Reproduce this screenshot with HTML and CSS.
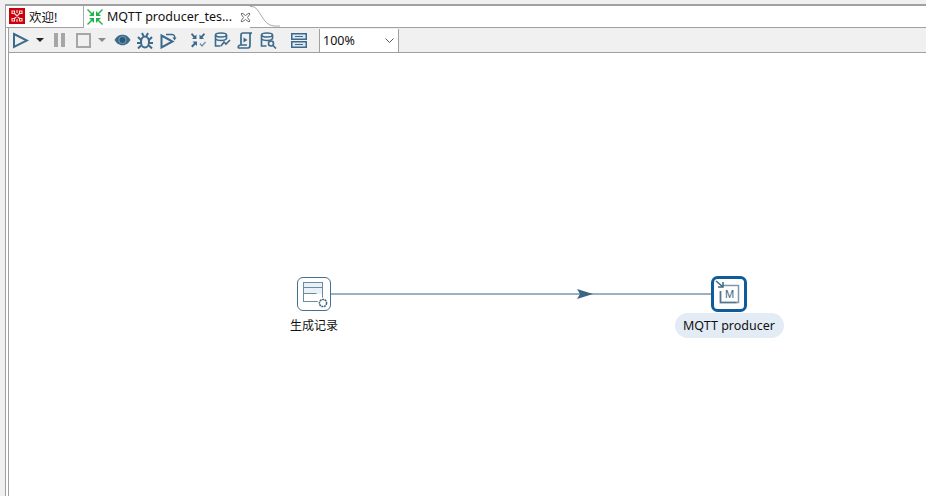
FILE: index.html
```html
<!DOCTYPE html>
<html lang="zh">
<head>
<meta charset="utf-8">
<title>MQTT producer</title>
<link rel="stylesheet" href="styles.css">
</head>
<body>
<div class="top-strip"></div>
<div class="frame">
  <div class="tabs">
    <div class="tab tab-welcome">
      <svg class="tab-icon" width="16" height="16" viewBox="0 0 16 16"><rect width="16" height="16" fill="#cc000a"/><g fill="none" stroke="#fbdcdc" stroke-width="1.100"><path d="M3 3h2.500v2.500H3zM10.500 3H13v2.500h-2.500zM3 10.500h2.500V13H3zM10.500 10.500H13V13h-2.500zM5.500 5.500l5 5M10.500 5.500l-5 5M8 2v3M8 11v3"/></g></svg>
      <span class="tab-label">欢迎!</span>
    </div>
    <div class="tab tab-active">
      <svg class="tab-icon" width="16" height="16" viewBox="0 0 16 16"><g fill="#22b24c"><path d="M0 1l1-1 4 4 2-2v5H2l2-2z"/><path d="M16 1l-1-1-4 4-2-2v5h5l-2-2z"/><path d="M0 15l1 1 4-4 2 2V9H2l2 2z"/><path d="M16 15l-1 1-4-4-2 2V9h5l-2 2z"/></g></svg>
      <span class="tab-label">MQTT producer_tes...</span>
      <svg class="tab-close" width="11" height="11" viewBox="0 0 11 11"><path d="M1 2l1-1 3.500 2.500L9 1l1 1-2.500 3.500L10 9l-1 1-3.500-2.500L2 10l-1-1 2.500-3.500z" fill="#fff" stroke="#6f6f6f" stroke-width="1"/></svg>
    </div>
    <svg class="tab-curve" width="30" height="21" viewBox="0 0 30 21"><path d="M0 .5h2c8 0 10 19 22 19.500h6" fill="#fff" stroke="#a9a9a9"/></svg>
  </div>
  <div class="toolbar">
    <svg class="tool" width="17" height="17" viewBox="0 0 17 17"><path d="M2 2l13 6.500L2 15z" fill="none" stroke="#3b6a8c" stroke-width="2"/></svg>
    <svg class="arrow" width="8" height="4" viewBox="0 0 8 4"><path d="M0 0h8L4 4z" fill="#222"/></svg>
    <svg class="tool tool-pause" width="12" height="16" viewBox="0 0 12 16"><path d="M0 1h4v14H0zM7 1h4v14H7z" fill="#a6a6a6"/></svg>
    <svg class="tool tool-stop" width="15" height="15" viewBox="0 0 15 15"><rect x="1" y="1" width="13" height="13" fill="none" stroke="#a6a6a6" stroke-width="2"/></svg>
    <svg class="arrow arrow-off" width="8" height="4" viewBox="0 0 8 4"><path d="M0 0h8L4 4z" fill="#8a8a8a"/></svg>
    <svg class="tool tool-eye" width="17" height="12" viewBox="0 0 17 12"><path d="M.5 6C3 2 5.500.8 8.500.8S14 2 16.500 6c-2.500 4-5 5.200-8 5.200S3 10 .5 6z" fill="#3b6a8c"/><circle cx="8.500" cy="6" r="3.600" fill="#2f5877" stroke="#9cb5c7" stroke-width=".7"/></svg>
    <svg class="tool tool-bug" width="16" height="17" viewBox="0 0 16 17"><g fill="none" stroke="#3b6a8c" stroke-width="2"><ellipse cx="8" cy="10" rx="4" ry="5.500"/><path d="M5 1l1.500 3M11 1L9.500 4M1 5l3 3M15 5l-3 3M0 11h4M16 11h-4M1 16.500L4 13.500M15 16.500L12 13.500"/></g></svg>
    <svg class="tool tool-step" width="17" height="17" viewBox="0 0 17 17"><path d="M1.500 3.500l11 6-11 6z" fill="none" stroke="#3b6a8c" stroke-width="2"/><path d="M6 2.500h6c2.500 0 3 2 2.500 4" fill="none" stroke="#3b6a8c" stroke-width="1.500"/><path d="M12.500 5.500h4L14.500 8.500z" fill="#3b6a8c"/></svg>
    <svg class="tool tool-group" width="15" height="15" viewBox="0 0 15 15"><g fill="#3b6a8c"><path d="M1 0l3 3 1.500-1.500V6H1l1.500-1.500-2.500-3z"/><path d="M13 0l-3 3-1.500-1.500V6H13l-1.500-1.500 2.500-3z"/><path d="M0 13l3-3-1.500-1.500H6V13l-1.500-1.500L1.500 14.500z"/></g><path d="M9 10.500l2 2.500 3.500-4" fill="none" stroke="#6f8ea5" stroke-width="1.300"/></svg>
    <svg class="tool tool-db" width="17" height="17" viewBox="0 0 17 17"><g fill="none" stroke="#3b6a8c" stroke-width="1.600"><ellipse cx="7" cy="3" rx="5.500" ry="2"/><path d="M1.500 3v11h5M12.500 3v4M1.500 7c2 2 9 2 11 0"/><path d="M7 14l3-4 2 2 4-4"/></g></svg>
    <svg class="tool tool-script" width="16" height="17" viewBox="0 0 16 17"><g fill="none" stroke="#3b6a8c" stroke-width="1.700"><path d="M4 13V3c0-1 1-2 2-2h9c-1 0-2 1-2 2v10c0 2-1 3-2 3H2c-1 0-1.500-3 2-3h6"/></g><path d="M6.500 5.500l4 2.500-4 2.500z" fill="#3b6a8c"/></svg>
    <svg class="tool tool-query" width="17" height="17" viewBox="0 0 17 17"><g fill="none" stroke="#3b6a8c" stroke-width="1.600"><ellipse cx="7" cy="3" rx="5.500" ry="2"/><path d="M1.500 3v11h5M12.500 3v4M1.500 7c2 2 9 2 11 0"/><circle cx="11" cy="11.500" r="2.500"/><path d="M13 13.500l3 3"/></g></svg>
    <svg class="tool tool-grid" width="16" height="15" viewBox="0 0 16 15"><g fill="#dfe7ee" stroke="#3b6a8c" stroke-width="1.500"><rect x=".75" y=".75" width="14.500" height="5.500"/><rect x=".75" y="8.750" width="14.500" height="5.500"/></g><path d="M4 3.500h8M4 11.500h8" stroke="#3b6a8c"/></svg>
    <div class="zoom-box">
      <span class="zoom-value">100%</span>
      <svg width="9" height="5" viewBox="0 0 9 5"><path d="M.5.500l4 4 4-4" fill="none" stroke="#555"/></svg>
    </div>
  </div>
  <div class="canvas">
    <svg class="link" width="385" height="10" viewBox="0 0 385 10"><path d="M0 5h385" stroke="#3b6580" stroke-width="1"/><path d="M247 0l16 5-16 5 3-5z" fill="#3b6580"/></svg>
    <div class="node node-generate">
      <svg class="node-icon" width="34" height="34" viewBox="0 0 34 34"><rect x=".5" y=".5" width="33" height="33" rx="5.500" fill="#fff" stroke="#46708f"/><rect x="6.500" y="5.500" width="19" height="19" fill="#eaf1f6" stroke="#6b8ba3"/><path d="M6.500 10.500h19M6.500 16.500h13" stroke="#6b8ba3"/><path d="M7 17h18v7H7z" fill="#fff"/><path d="M6.500 17v7.500h11" fill="none" stroke="#6b8ba3"/><circle cx="26" cy="26" r="5.500" fill="#fff"/><circle cx="26" cy="26" r="3.600" fill="#fff" stroke="#3b6580" stroke-width="1.500" stroke-dasharray="2 .6"/></svg>
      <span class="node-label">生成记录</span>
    </div>
    <div class="node node-mqtt">
      <svg class="node-icon" width="36" height="36" viewBox="0 0 36 36"><rect x="1.500" y="1.500" width="33" height="33" rx="5" fill="#fff" stroke="#0e5c9a" stroke-width="3"/><path d="M12 9.500H27.500V26.500H9.500V15" fill="#fff" stroke="#7d99ae" stroke-width="1.500"/><path d="M9.500 15v11.500h16" fill="none" stroke="#54778f" stroke-width="1.500"/><path d="M5 5l6.500 5.500" stroke="#3b6580" stroke-width="1.500"/><path d="M12 6v5H7" fill="none" stroke="#3b6580" stroke-width="1.500"/><text class="icon-letter" x="18.500" y="22" text-anchor="middle">M</text></svg>
      <span class="node-label node-label-pill">MQTT producer</span>
    </div>
  </div>
</div>
</body>
</html>
```

FILE: styles.css
```css
* { box-sizing: border-box; }
html, body { margin: 0; height: 100%; }
body {
  width: 926px;
  height: 496px;
  overflow: hidden;
  background: #f0f0f0;
  font-family: "Noto Sans", "Noto Sans CJK SC", sans-serif;
  font-size: 12.5px;
  color: #111;
  display: flex;
  flex-direction: column;
}
.top-strip {
  height: 4px;
  flex: none;
}
.frame {
  flex: 1;
  margin-left: 5px;
  border-top: 1px solid #a0a0a0;
  border-left: 1px solid #a0a0a0;
  background: #fff;
  display: flex;
  flex-direction: column;
  min-height: 0;
}
.tabs {
  position: relative;
  height: 23px;
  flex: none;
  border-top: 1px solid #a0a0a0;
  border-bottom: 1px solid #a0a0a0;
  display: flex;
}
.tab {
  display: flex;
  align-items: center;
  height: 21px;
  background: #fff;
}
.tab-icon { flex: none; margin-top: -1px; }
.tab-welcome {
  width: 78px;
  padding-left: 3px;
  border-right: 1px solid #a9a9a9;
}
.tab-active {
  width: 166px;
  height: 22px;
  padding-left: 3px;
  position: relative;
  z-index: 1;
}
.tab-label {
  margin-left: 4px;
  white-space: nowrap;
  margin-top: -1px;
}
.tab-close {
  flex: none;
  margin-left: auto;
  margin-right: -1px;
}
.tab-curve {
  flex: none;
  position: relative;
  z-index: 1;
  height: 21px;
}
.toolbar {
  height: 25px;
  flex: none;
  margin-left: 2px;
  background: #f0f0f0;
  border-left: 1px solid #a0a0a0;
  border-bottom: 1px solid #a0a0a0;
  display: flex;
  align-items: center;
  padding-left: 3px;
}
.tool { flex: none; }
.arrow { flex: none; margin-left: 7px; }
.tool-pause { margin-left: 10px; }
.tool-stop { margin-left: 10px; }
.tool-eye { margin-left: 8px; }
.tool-bug { margin-left: 6px; }
.tool-step { margin-left: 7px; }
.tool-group { margin-left: 14px; }
.tool-db { margin-left: 8px; }
.tool-script { margin-left: 6px; }
.tool-query { margin-left: 7px; }
.tool-grid { margin-left: 14px; }
.zoom-box {
  flex: none;
  width: 80px;
  height: 23px;
  margin-left: 12px;
  background: #fff;
  border-left: 1px solid #a0a0a0;
  border-right: 1px solid #a0a0a0;
  display: flex;
  align-items: center;
  justify-content: space-between;
  padding: 0 4px 0 3px;
}
.canvas {
  position: relative;
  flex: 1;
  margin-left: 2px;
  border-left: 1px solid #a0a0a0;
  background: #fff;
}
.link {
  position: absolute;
  left: 321px;
  top: 236px;
}
.node {
  position: absolute;
  display: flex;
  flex-direction: column;
  align-items: center;
}
.node-icon { display: block; }
.node-generate { left: 270px; top: 224px; width: 70px; }
.node-mqtt { left: 665px; top: 223px; width: 110px; }
.node-label {
  font-size: 12px;
  line-height: 24px;
  margin-top: 3px;
  white-space: nowrap;
}
.node-label-pill {
  width: 109px;
  height: 25px;
  line-height: 26px;
  text-align: center;
  background: #e3ecf5;
  border-radius: 12.5px;
  font-size: 12.5px;
  margin-top: 1px;
}
.icon-letter {
  font-family: "Liberation Sans", sans-serif;
  font-size: 11px;
  fill: #3b6580;
}
```
